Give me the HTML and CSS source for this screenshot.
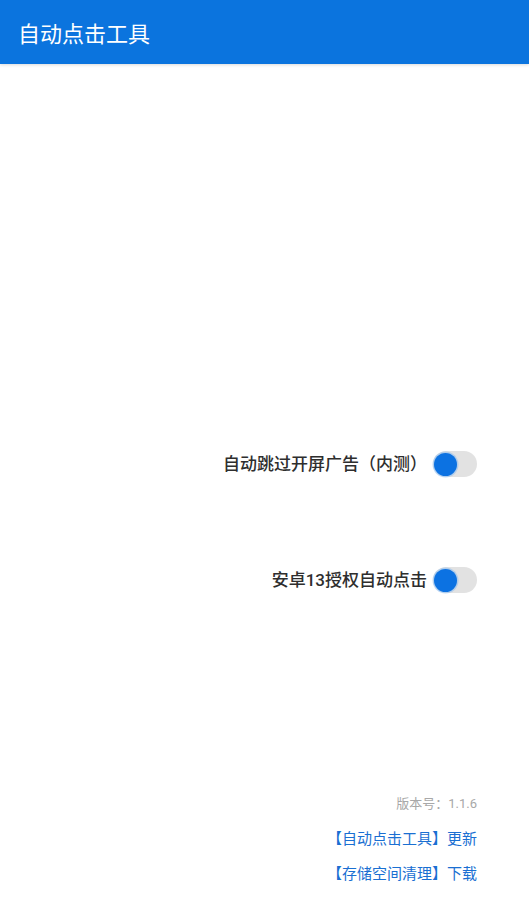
FILE: index.html
```html
<!DOCTYPE html>
<html lang="zh-CN">
<head>
<meta charset="utf-8">
<title>自动点击工具</title>
<link rel="stylesheet" href="styles.css">
</head>
<body>
<header class="appbar">
  <h1 class="title">自动点击工具</h1>
</header>
<main class="content">
  <div class="settings">
    <div class="row">
      <span class="label">自动跳过开屏广告（内测）</span>
      <span class="switch"><span class="thumb"></span></span>
    </div>
    <div class="row">
      <span class="label">安卓13授权自动点击</span>
      <span class="switch"><span class="thumb"></span></span>
    </div>
  </div>
  <footer class="footer">
    <div class="version">版本号：1.1.6</div>
    <a class="link">【自动点击工具】更新</a>
    <a class="link">【存储空间清理】下载</a>
  </footer>
</main>
</body>
</html>
```

FILE: styles.css
```css
* { box-sizing: border-box; }
html, body {
  margin: 0;
  padding: 0;
  background: #ffffff;
  font-family: "Roboto", "Noto Sans CJK SC", sans-serif;
}
body {
  width: 529px;
  height: 918px;
  overflow: hidden;
  display: flex;
  flex-direction: column;
}
.appbar {
  height: 64px;
  background: #0b74de;
  display: flex;
  align-items: center;
  padding: 5px 0 0 18px;
  box-shadow: 0 1px 3px rgba(0, 0, 0, 0.15);
  flex: none;
}
.title {
  margin: 0;
  color: #ffffff;
  font-size: 22px;
  font-weight: 400;
  line-height: 30px;
}
.content {
  flex: 1;
  display: flex;
  flex-direction: column;
  padding: 387px 52px 0 0;
}
.settings {
  display: flex;
  flex-direction: column;
  align-items: flex-end;
  gap: 90px;
}
.row {
  display: flex;
  align-items: center;
  height: 26px;
  gap: 6px;
}
.label {
  font-size: 17px;
  font-weight: 500;
  color: #2e2e2e;
  line-height: 24px;
}
.switch {
  width: 44px;
  height: 26px;
  border-radius: 13px;
  background: #e2e2e2;
  display: flex;
  align-items: center;
  padding-left: 1px;
}
.thumb {
  width: 23px;
  height: 23px;
  border-radius: 50%;
  background: #0c72e2;
  box-shadow: 0 0 0 1.5px rgba(120, 180, 245, 0.45);
}
.footer {
  margin-top: 201px;
  display: flex;
  flex-direction: column;
  align-items: flex-end;
}
.version {
  font-size: 13px;
  color: #a8a8a8;
  line-height: 20px;
  margin-bottom: 14px;
}
.link {
  font-size: 15px;
  color: #1a6fd2;
  line-height: 22px;
  margin-bottom: 13px;
  text-decoration: none;
}
```
